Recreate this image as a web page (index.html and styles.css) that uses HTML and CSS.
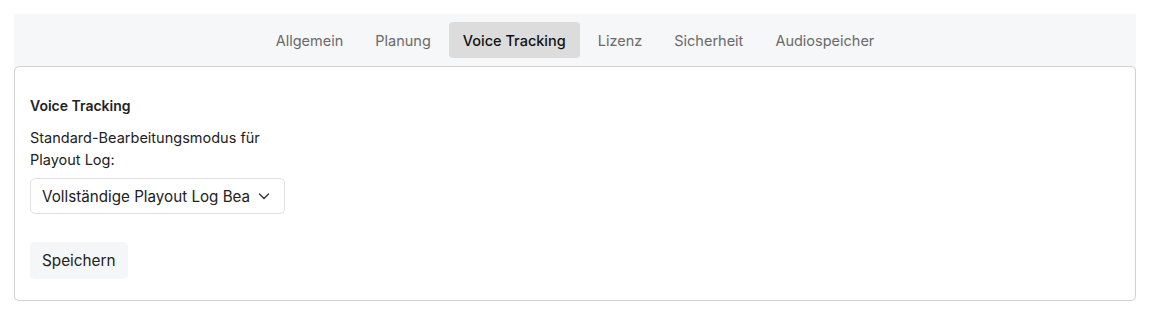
FILE: index.html
```html
<!DOCTYPE html>
<html>
<head>
<title>Einstellungen</title>
<link rel="stylesheet" href="styles.css">
</head>
<body>
<div class="settings">
  <div class="tabs">
    <button class="tab">Allgemein</button>
    <button class="tab">Planung</button>
    <button class="tab active">Voice Tracking</button>
    <button class="tab">Lizenz</button>
    <button class="tab">Sicherheit</button>
    <button class="tab">Audiospeicher</button>
  </div>
  <div class="panel">
    <h3 class="panel-title">Voice Tracking</h3>
    <div class="field">
      <label class="label" for="mode">Standard-Bearbeitungsmodus für Playout Log:</label>
      <div class="select" id="mode">
        <span class="select-text">Vollständige Playout Log Bearbeitung</span>
        <svg class="chevron" width="12" height="12" viewBox="0 0 12 12"><path d="M1.5 4 L6 8.5 L10.5 4" fill="none" stroke="#333" stroke-width="1.4" stroke-linecap="round" stroke-linejoin="round"/></svg>
      </div>
    </div>
    <button class="button">Speichern</button>
  </div>
</div>
</body>
</html>
```

FILE: styles.css
```css
body {
  margin: 0;
  padding: 14px;
  background: #fff;
  font-family: Inter, "Noto Sans", sans-serif;
  color: #222;
}
.settings {
  background-color: #f6f7f8;
}
.tabs {
  display: flex;
  justify-content: center;
  gap: 4px;
  padding: 8px 0;
}
.tab {
  font-family: inherit;
  font-size: 14.5px;
  color: #6a6a6a;
  background: none;
  border: 0;
  border-radius: 4px;
  height: 36px;
  padding: 0 14px;
}
.tab.active {
  background-color: #dcdcdc;
  color: #111;
  font-weight: 500;
}
.panel {
  background: #fff;
  border: 1px solid #d2d2d2;
  border-radius: 5px;
  padding: 28px 15px 21px;
}
.panel-title {
  margin: 0 0 10px;
  font-size: 14px;
  font-weight: 600;
  line-height: 22px;
}
.field {
  width: 255px;
}
.label {
  display: block;
  font-size: 14.5px;
  line-height: 22px;
  margin-bottom: 7px;
}
.select {
  display: flex;
  align-items: center;
  height: 34px;
  border: 1px solid #e2e2e2;
  border-radius: 5px;
  padding: 0 14px 0 11px;
  font-size: 15.2px;
}
.select-text {
  flex: 1;
  white-space: nowrap;
  overflow: hidden;
}
.chevron {
  margin-left: 7px;
}
.button {
  margin-top: 28px;
  font-family: inherit;
  font-size: 15.3px;
  color: #222;
  background-color: #f5f6f7;
  border: 0;
  border-radius: 5px;
  height: 37px;
  padding: 0 12px;
}
```
